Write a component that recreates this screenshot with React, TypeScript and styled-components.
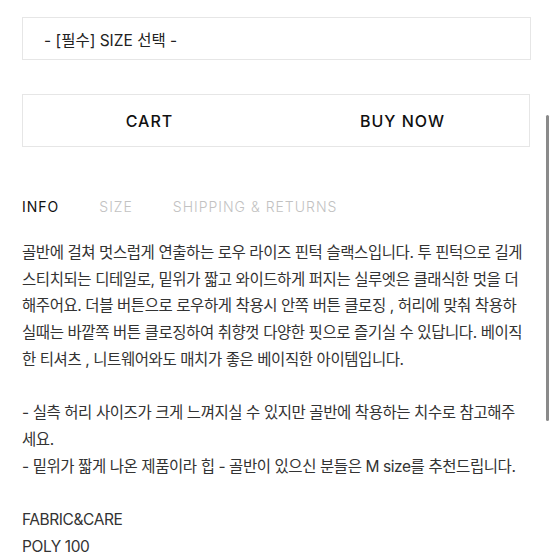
import React from "react";
import styled, { createGlobalStyle } from "styled-components";

const border_gray = "#e6e6e6";
const text_dark = "#222222";
const text_body = "#333333";
const tab_muted = "#c2c2c2";

const font_stack = `Inter, "Noto Sans CJK KR", "Noto Sans", sans-serif`;

const GlobalStyle = createGlobalStyle`
    html, body {
        margin: 0;
        padding: 0;
        background: #ffffff;
        overflow: hidden;
    }
    body {
        font-family: ${font_stack};
        color: ${text_body};
    }
`;

const tabs = ["INFO", "SIZE", "SHIPPING & RETURNS"];

const info_text = `골반에 걸쳐 멋스럽게 연출하는 로우 라이즈 핀턱 슬랙스입니다. 투 핀턱으로 길게
스티치되는 디테일로, 밑위가 짧고 와이드하게 퍼지는 실루엣은 클래식한 멋을 더
해주어요. 더블 버튼으로 로우하게 착용시 안쪽 버튼 클로징 , 허리에 맞춰 착용하
실때는 바깥쪽 버튼 클로징하여 취향껏 다양한 핏으로 즐기실 수 있답니다. 베이직
한 티셔츠 , 니트웨어와도 매치가 좋은 베이직한 아이템입니다.

- 실측 허리 사이즈가 크게 느껴지실 수 있지만 골반에 착용하는 치수로 참고해주
세요.
- 밑위가 짧게 나온 제품이라 힙 - 골반이 있으신 분들은 M size를 추천드립니다.

FABRIC&CARE
POLY 100`;

export default function App() {
    return (
        <Page>
            <GlobalStyle />
            <Content>
                <SelectBox>- [필수] SIZE 선택 -</SelectBox>
                <ButtonRow>
                    <ActionButton>CART</ActionButton>
                    <ActionButton>BUY NOW</ActionButton>
                </ButtonRow>
                <TabBar>
                    {tabs.map((t, i) => (
                        <Tab key={t} $active={i === 0}>
                            {t}
                        </Tab>
                    ))}
                </TabBar>
                <InfoText>{info_text}</InfoText>
            </Content>
            <ScrollThumb />
        </Page>
    );
}

const Page = styled.div`
    position: relative;
    width: 554px;
    height: 554px;
    overflow: hidden;
    background: #ffffff;
`;

const Content = styled.div`
    display: flex;
    flex-direction: column;
    padding: 17px 0 0 22px;
    width: 509px;
`;

const SelectBox = styled.div`
    height: 43px;
    box-sizing: border-box;
    border: 1px solid ${border_gray};
    display: flex;
    align-items: center;
    padding-left: 21px;
    font-size: 15.5px;
    color: ${text_dark};
`;

const ButtonRow = styled.div`
    margin-top: 34px;
    width: 508px;
    height: 53px;
    box-sizing: border-box;
    border: 1px solid ${border_gray};
    display: grid;
    grid-template-columns: 1fr 1fr;

    & > * + * {
        border-left: 1px solid ${border_gray};
    }
`;

const ActionButton = styled.button`
    all: unset;
    display: flex;
    align-items: center;
    justify-content: center;
    font-family: ${font_stack};
    font-size: 16px;
    font-weight: 500;
    letter-spacing: 1px;
    color: #111111;
`;

const TabBar = styled.div`
    margin-top: 49px;
    display: flex;
    gap: 40px;
    height: 20px;
    align-items: center;
`;

const Tab = styled.div<{ $active?: boolean }>`
    font-size: 14px;
    letter-spacing: 1px;
    font-weight: ${(p) => (p.$active ? 400 : 300)};
    color: ${(p) => (p.$active ? "#111111" : tab_muted)};
`;

const InfoText = styled.div`
    margin-top: 24px;
    white-space: pre;
    font-size: 15.5px;
    line-height: 26.7px;
    color: ${text_body};
    letter-spacing: -0.42px;
`;

const ScrollThumb = styled.div`
    position: absolute;
    right: 5px;
    top: 115px;
    width: 3px;
    height: 306px;
    border-radius: 2px;
    background: #8a8a8a;
`;
